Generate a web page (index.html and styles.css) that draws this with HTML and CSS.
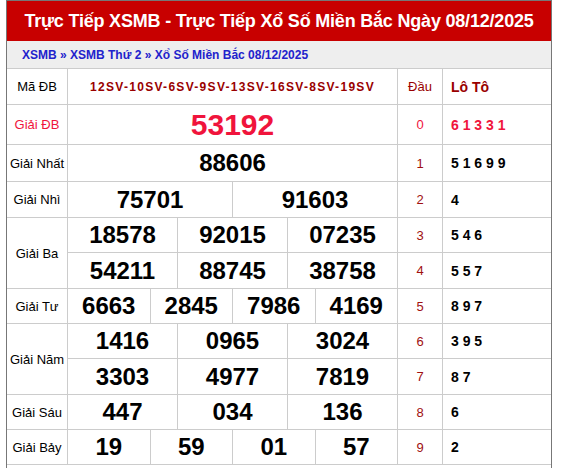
FILE: index.html
```html
<!DOCTYPE html>
<html lang="vi">
<head>
<meta charset="utf-8">
<title>XSMB 08/12/2025</title>
<link rel="stylesheet" href="styles.css">
</head>
<body>
<div class="page">
  <h1 class="title">Trực Tiếp XSMB - Trực Tiếp Xổ Số Miền Bắc Ngày 08/12/2025</h1>
  <div class="crumb"><a href="#">XSMB</a> » <a href="#">XSMB Thứ 2</a> » <a href="#">Xổ Số Miền Bắc 08/12/2025</a></div>
  <div class="grid">
    <div class="c lbl">Mã ĐB</div>
    <div class="c code s12">12SV-10SV-6SV-9SV-13SV-16SV-8SV-19SV</div>
    <div class="c dau-h">Đầu</div>
    <div class="c loto loto-h">Lô Tô</div>

    <div class="c lbl red">Giải ĐB</div>
    <div class="c num db s12">53192</div>
    <div class="c dau red">0</div>
    <div class="c loto red">6 1 3 3 1</div>

    <div class="c lbl">Giải Nhất</div>
    <div class="c num s12">88606</div>
    <div class="c dau">1</div>
    <div class="c loto">5 1 6 9 9</div>

    <div class="c lbl">Giải Nhì</div>
    <div class="c num s6">75701</div>
    <div class="c num s6">91603</div>
    <div class="c dau">2</div>
    <div class="c loto">4</div>

    <div class="c lbl r2">Giải Ba</div>
    <div class="c num s4">18578</div>
    <div class="c num s4">92015</div>
    <div class="c num s4">07235</div>
    <div class="c dau">3</div>
    <div class="c loto">5 4 6</div>
    <div class="c num s4">54211</div>
    <div class="c num s4">88745</div>
    <div class="c num s4">38758</div>
    <div class="c dau">4</div>
    <div class="c loto">5 5 7</div>

    <div class="c lbl">Giải Tư</div>
    <div class="c num s3">6663</div>
    <div class="c num s3">2845</div>
    <div class="c num s3">7986</div>
    <div class="c num s3">4169</div>
    <div class="c dau">5</div>
    <div class="c loto">8 9 7</div>

    <div class="c lbl r2">Giải Năm</div>
    <div class="c num s4">1416</div>
    <div class="c num s4">0965</div>
    <div class="c num s4">3024</div>
    <div class="c dau">6</div>
    <div class="c loto">3 9 5</div>
    <div class="c num s4">3303</div>
    <div class="c num s4">4977</div>
    <div class="c num s4">7819</div>
    <div class="c dau">7</div>
    <div class="c loto">8 7</div>

    <div class="c lbl">Giải Sáu</div>
    <div class="c num s4">447</div>
    <div class="c num s4">034</div>
    <div class="c num s4">136</div>
    <div class="c dau">8</div>
    <div class="c loto">6</div>

    <div class="c lbl">Giải Bảy</div>
    <div class="c num s3">19</div>
    <div class="c num s3">59</div>
    <div class="c num s3">01</div>
    <div class="c num s3">57</div>
    <div class="c dau">9</div>
    <div class="c loto">2</div>
  </div>
</div>
</body>
</html>
```

FILE: styles.css
```css
html, body {
  margin: 0;
  padding: 0;
  background: #fff;
}

body {
  font-family: "Liberation Sans", Arial, sans-serif;
  color: #000;
}

.page {
  margin-left: 6px;
  width: 546px;
  min-height: 480px;
  box-sizing: border-box;
  border: 1px solid #777;
  border-bottom: none;
}

.title {
  margin: 0;
  height: 40px;
  background: #c80000;
  color: #fff;
  font-size: 18px;
  font-weight: bold;
  letter-spacing: -0.2px;
  display: flex;
  align-items: center;
  justify-content: center;
  white-space: nowrap;
}

.crumb {
  height: 27px;
  background: #eeeeee;
  border-bottom: 1px solid #cccccc;
  padding-left: 15px;
  display: flex;
  align-items: center;
  font-size: 12px;
  font-weight: bold;
  color: #2222cc;
  white-space: pre;
}

.crumb a {
  color: #2222cc;
  text-decoration: none;
}

.grid {
  display: grid;
  grid-template-columns: 60px repeat(12, 1fr) 44px 108px;
  grid-template-rows: 35px 39px 36px 35px 34px 35px 34px 34px 35px 34px 34px;
  gap: 1px;
  padding-bottom: 1px;
  background: #cccccc;
}

.c {
  background: #fff;
  display: flex;
  align-items: center;
  justify-content: center;
  white-space: nowrap;
}

.s12 { grid-column: span 12; }
.s6 { grid-column: span 6; }
.s4 { grid-column: span 4; }
.s3 { grid-column: span 3; }
.r2 { grid-row: span 2; }

.lbl {
  font-size: 13px;
}

.red {
  color: #f0143c;
}

.code {
  font-size: 12px;
  font-weight: bold;
  letter-spacing: 1.3px;
  color: #990000;
}

.dau-h {
  font-size: 13px;
  color: #990000;
}

.loto-h {
  color: #990000;
}

.num {
  font-size: 24px;
  font-weight: bold;
}

.num.db {
  font-size: 30px;
  color: #f0143c;
}

.dau {
  font-size: 13px;
  color: #a01010;
}

.dau.red {
  color: #f0143c;
}

.loto {
  justify-content: flex-start;
  padding-left: 8px;
  font-size: 14px;
  font-weight: bold;
}

.loto.red {
  color: #f0143c;
}
```
